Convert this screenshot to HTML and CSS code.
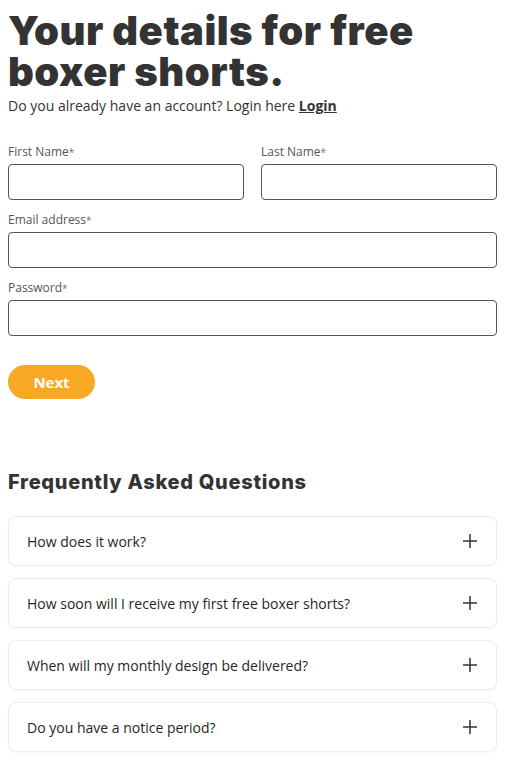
FILE: index.html
```html
<!DOCTYPE html>
<html lang="en">
<head>
    <meta charset="UTF-8">
    <meta name="viewport" content="width=device-width, initial-scale=1.0">
    <title>Your details</title>
    <link rel="stylesheet" href="styles.css">
</head>
<body>
    <main class="page">
        <h1 class="title">Your details for free boxer shorts.</h1>
        <p class="login-line">Do you already have an account? Login here <a href="#" class="login-link">Login</a></p>

        <form class="signup" onsubmit="return false;">
            <div class="row">
                <div class="field">
                    <label for="firstName">First Name<span class="req">*</span></label>
                    <input type="text" id="firstName">
                </div>
                <div class="field">
                    <label for="lastName">Last Name<span class="req">*</span></label>
                    <input type="text" id="lastName">
                </div>
            </div>
            <div class="field">
                <label for="email">Email address<span class="req">*</span></label>
                <input type="email" id="email">
            </div>
            <div class="field">
                <label for="password">Password<span class="req">*</span></label>
                <input type="password" id="password">
            </div>
            <button type="submit" class="next">Next</button>
        </form>

        <section class="faq">
            <h2>Frequently Asked Questions</h2>
            <div class="faq-item">
                <span>How does it work?</span>
                <svg class="plus" width="16" height="16" viewBox="0 0 16 16"><path d="M8 1v14M1 8h14" stroke="#333" stroke-width="1.5" fill="none"/></svg>
            </div>
            <div class="faq-item">
                <span>How soon will I receive my first free boxer shorts?</span>
                <svg class="plus" width="16" height="16" viewBox="0 0 16 16"><path d="M8 1v14M1 8h14" stroke="#333" stroke-width="1.5" fill="none"/></svg>
            </div>
            <div class="faq-item">
                <span>When will my monthly design be delivered?</span>
                <svg class="plus" width="16" height="16" viewBox="0 0 16 16"><path d="M8 1v14M1 8h14" stroke="#333" stroke-width="1.5" fill="none"/></svg>
            </div>
            <div class="faq-item">
                <span>Do you have a notice period?</span>
                <svg class="plus" width="16" height="16" viewBox="0 0 16 16"><path d="M8 1v14M1 8h14" stroke="#333" stroke-width="1.5" fill="none"/></svg>
            </div>
        </section>
    </main>
</body>
</html>
```

FILE: styles.css
```css
body {
    font-family: "Open Sans", Arial, sans-serif;
    color: #333;
    background-color: #fff;
    margin: 0;
    padding: 0;
}
.page {
    padding: 10px 12px 16px 8px;
}
.title {
    font-family: Inter, "Liberation Sans", sans-serif;
    font-weight: 900;
    font-size: 40px;
    line-height: 41px;
    letter-spacing: 0.5px;
    margin: 0;
    color: #333;
}
.login-line {
    font-size: 14px;
    margin: 4px 0 0;
}
.login-link {
    color: #333;
    font-weight: 700;
}
.signup {
    margin-top: 28px;
}
.row {
    display: flex;
    gap: 17px;
}
.row .field {
    flex: 1;
}
.field {
    margin-bottom: 11px;
}
.field label {
    display: block;
    font-size: 12px;
    color: #555;
    margin-bottom: 4px;
}
.req {
    font-size: 10px;
    color: #777;
}
.field input {
    display: block;
    width: 100%;
    box-sizing: border-box;
    height: 36px;
    border: 1px solid #555;
    border-radius: 4px;
    padding: 0 10px;
    font-family: inherit;
    font-size: 14px;
}
.next {
    margin-top: 18px;
    width: 87px;
    height: 34px;
    border: none;
    border-radius: 17px;
    background-color: #f8a823;
    color: #fff;
    font-family: inherit;
    font-size: 15px;
    font-weight: 700;
    cursor: pointer;
}
.faq {
    margin-top: 71px;
}
.faq h2 {
    font-family: Inter, "Liberation Sans", sans-serif;
    font-weight: 800;
    font-size: 20px;
    letter-spacing: 0.7px;
    margin: 0 0 22px;
}
.faq-item {
    display: flex;
    align-items: center;
    justify-content: space-between;
    height: 50px;
    box-sizing: border-box;
    padding: 0 18px;
    margin-bottom: 12px;
    border: 1px solid #ececec;
    border-radius: 8px;
    box-shadow: 0 1px 2px rgba(0, 0, 0, 0.04);
    font-size: 14px;
    font-weight: 500;
    color: #262626;
}
.plus {
    flex-shrink: 0;
}
```
